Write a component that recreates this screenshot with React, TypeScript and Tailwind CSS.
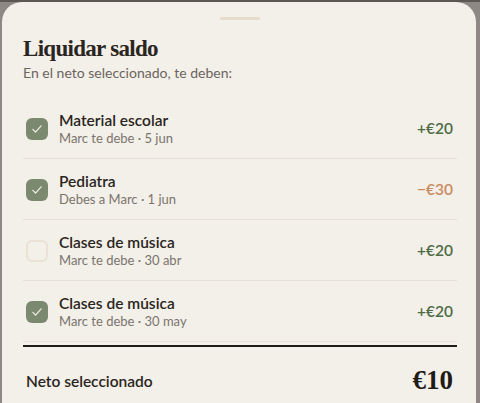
import * as React from "react"

// ── Data ─────────────────────────────────────────────────────
interface Item {
  title: string
  sub: string
  amount: string
  owed: boolean
  checked: boolean
}

const items: Item[] = [
  { title: "Material escolar", sub: "Marc te debe · 5 jun", amount: "+€20", owed: true, checked: true },
  { title: "Pediatra", sub: "Debes a Marc · 1 jun", amount: "−€30", owed: false, checked: true },
  { title: "Clases de música", sub: "Marc te debe · 30 abr", amount: "+€20", owed: true, checked: false },
  { title: "Clases de música", sub: "Marc te debe · 30 may", amount: "+€20", owed: true, checked: true },
]

const sans = "font-['Lato','Noto_Sans',sans-serif]"
const serif = "font-['Liberation_Serif','DejaVu_Serif',serif]"

function Check({ on }: { on: boolean }): React.JSX.Element {
  if (!on) {
    return <span className="size-[22px] shrink-0 rounded-[6px] border-2 border-[#e9e1d4]" />
  }
  return (
    <span className="grid size-[22px] shrink-0 place-items-center rounded-[6px] bg-[#7b8a6e]">
      <svg viewBox="0 0 24 24" className="size-[14px]" fill="none" stroke="#f3efe9" strokeWidth={2} strokeLinecap="round" strokeLinejoin="round">
        <path d="M5 12.5l4.5 5L19 6.5" />
      </svg>
    </span>
  )
}

export default function App(): React.JSX.Element {
  return (
    <div className={`h-[403px] w-[480px] overflow-hidden border-t-2 border-[#5c5752] bg-[#8d8883] ${sans}`}>
      <div className="ml-[2px] mr-[4px] h-[420px] rounded-t-[20px] bg-[#f3efe9] pl-[21px] pr-[19px]">
        {/* grab handle */}
        <div className="flex justify-center pt-[15px]">
          <div className="h-[3px] w-10 rounded-full bg-[#e6dccb]" />
        </div>

        <h1 className={`mt-[15px] text-[23px] leading-[28px] font-bold tracking-[-0.7px] text-[#2a2520] ${serif}`}>
          Liquidar saldo
        </h1>
        <p className="text-[14px] leading-[20px] text-[#6b655e]">En el neto seleccionado, te deben:</p>

        <ul className="mt-[15px]">
          {items.map((it: Item, i: number): React.JSX.Element => (
            <li key={i} className="flex items-center border-b border-[#e7e0d6] pt-[12px] pb-[11px] pl-[3px] pr-1">
              <Check on={it.checked} />
              <div className="ml-[11px] flex-1">
                <p className="text-[15.5px] leading-[20px] font-semibold text-[#2a2520]">{it.title}</p>
                <p className="text-[13px] leading-[17px] text-[#7a746c]">{it.sub}</p>
              </div>
              <span className={`text-[15.5px] font-semibold ${it.owed ? "text-[#4d6b45]" : "text-[#c98a60]"}`}>
                {it.amount}
              </span>
            </li>
          ))}
        </ul>

        {/* total */}
        <div className="mt-[3px] flex items-center justify-between border-t-2 border-[#1f1b17] pt-[17px] pl-[3px] pr-1">
          <span className="mt-[4px] text-[15.5px] font-semibold text-[#2a2520]">Neto seleccionado</span>
          <span className={`text-[27px] leading-[32px] font-bold text-[#1f1b17] ${serif}`}>€10</span>
        </div>
      </div>
    </div>
  )
}
